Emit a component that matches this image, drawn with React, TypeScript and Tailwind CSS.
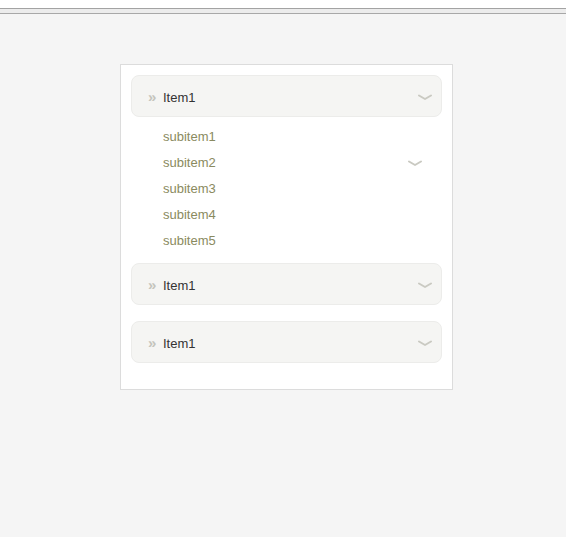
export default function App() {
  return (
    <div className="min-h-[537px] bg-[#f5f5f5]" style={{ fontFamily: '"Liberation Sans", Arial, sans-serif' }}>
      <div className="h-2 bg-white" />
      <div className="h-px bg-[#a3a3a3]" />
      <div className="h-1 bg-[#ececec]" />
      <div className="h-px bg-[#a8a8a8]" />
      <div className="pt-[50px] pl-[120px]">
        <div className="w-[333px] border border-[#dcdcdc] bg-white px-[10px] pt-[10px] pb-[10px]">
          <Header />
          <div className="relative pt-[7px] mb-[9px]">
            {['subitem1', 'subitem2', 'subitem3', 'subitem4', 'subitem5'].map((s) => (
              <div key={s} className="h-[26px] pl-[32px] text-[13px] leading-[26px] text-[#8a8a60]">
                {s}
              </div>
            ))}
            <div className="absolute left-[277px] top-[43px]">
              <Chevron />
            </div>
          </div>
          <Header />
          <div className="h-4" />
          <Header />
          <div className="h-4" />
        </div>
      </div>
    </div>
  );
}

function Header() {
  return (
    <div className="flex h-[42px] items-center rounded-[8px] border border-[#ececea] bg-[#f5f5f3] pl-[16px] pr-[9px] pt-[3px]">
      <span className="w-[15px] -mt-[2px] text-[15px] font-bold leading-none text-[#c4c4bc]">»</span>
      <span className="text-[13px] text-[#333]">Item1</span>
      <span className="ml-auto">
        <Chevron />
      </span>
    </div>
  );
}

function Chevron() {
  return (
    <svg width="14" height="7" viewBox="0 0 14 7" className="block">
      <path d="M1 1.5 L7 5 L13 1.5" fill="none" stroke="#cacac2" strokeWidth="2" strokeLinecap="round" strokeLinejoin="round" />
    </svg>
  );
}
